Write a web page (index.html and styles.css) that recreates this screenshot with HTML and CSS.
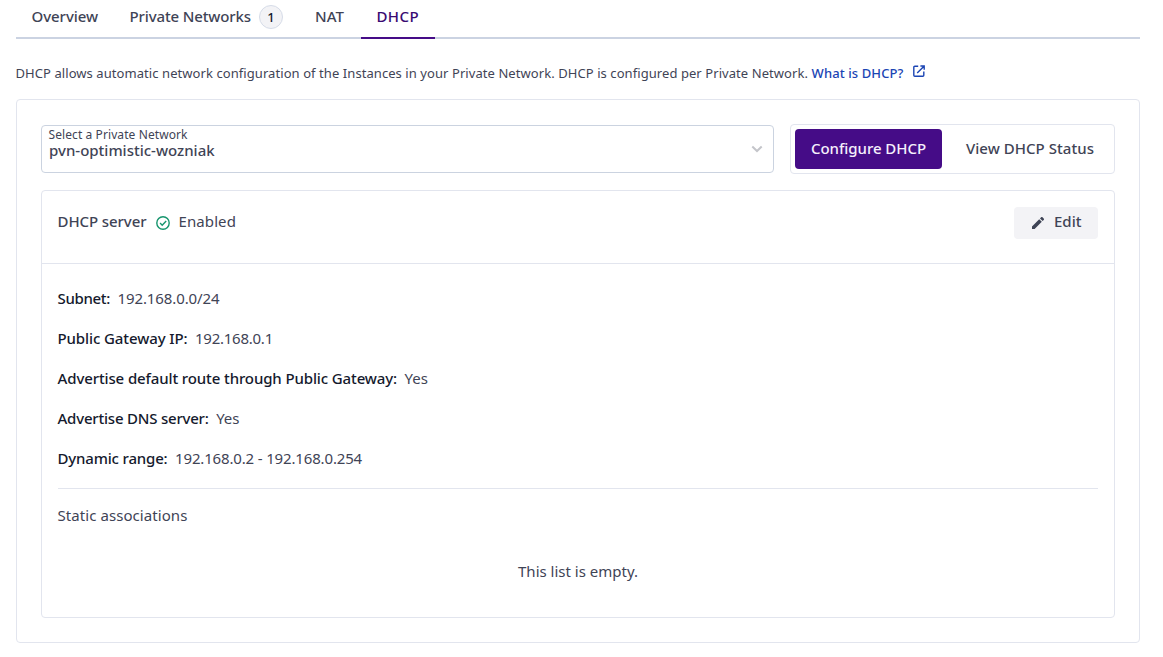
FILE: index.html
```html
<!DOCTYPE html>
<html lang="en">
<head>
<meta charset="utf-8">
<title>DHCP</title>
<link rel="stylesheet" href="styles.css">
</head>
<body>
<nav class="tabs">
  <a class="tab tab-overview">Overview</a>
  <a class="tab tab-networks"><span>Private Networks</span><span class="badge">1</span></a>
  <a class="tab tab-nat">NAT</a>
  <a class="tab tab-active">DHCP</a>
</nav>
<p class="intro"><span>DHCP allows automatic network configuration of the Instances in your Private Network. DHCP is configured per Private Network.</span><a class="link">What is DHCP?</a><svg class="external" viewBox="0 0 12 12"><path d="M5.2 1.2H1.8a1 1 0 0 0-1 1v8a1 1 0 0 0 1 1h8a1 1 0 0 0 1-1V6.6M7.4 1h3.8v3.8M11 1.2 4.2 8"/></svg></p>
<main class="card">
  <div class="controls">
    <div class="select">
      <div class="select-text">
        <span class="select-label">Select a Private Network</span>
        <span class="select-value">pvn-optimistic-wozniak</span>
      </div>
      <svg class="chevron" viewBox="0 0 12 8"><path d="m1.3 1.5 4.7 4.5 4.7-4.5"/></svg>
    </div>
    <div class="switch">
      <button class="option option-on">Configure DHCP</button>
      <button class="option option-off">View DHCP Status</button>
    </div>
  </div>
  <section class="panel">
    <header class="panel-head">
      <span class="title">DHCP server</span>
      <svg class="check" viewBox="0 0 14 14"><circle cx="7" cy="7" r="6.2"/><path d="m4.1 7.1 2.1 2.1 4-4.2"/></svg>
      <span class="state">Enabled</span>
      <button class="edit"><svg class="pencil" viewBox="0 0 12 12"><path d="M0 9.4 7.2 2.2l2.6 2.6L2.6 12H0zM8 1.4 9.1.3a1 1 0 0 1 1.4 0l1.2 1.2a1 1 0 0 1 0 1.4L10.6 4z"/></svg>Edit</button>
    </header>
    <div class="panel-body">
      <dl class="details">
        <div class="row"><dt class="k-subnet">Subnet:</dt><dd class="v-cidr">192.168.0.0/24</dd></div>
        <div class="row"><dt class="k-gateway">Public Gateway IP:</dt><dd class="v-ip">192.168.0.1</dd></div>
        <div class="row"><dt class="k-route">Advertise default route through Public Gateway:</dt><dd class="v-yes">Yes</dd></div>
        <div class="row"><dt class="k-dns">Advertise DNS server:</dt><dd class="v-yes">Yes</dd></div>
        <div class="row"><dt class="k-range">Dynamic range:</dt><dd class="v-range">192.168.0.2 - 192.168.0.254</dd></div>
      </dl>
      <h2 class="subtitle">Static associations</h2>
      <p class="empty">This list is empty.</p>
    </div>
  </section>
</main>
</body>
</html>
```
FILE: styles.css
```css
* { box-sizing: border-box; }
body {
  margin: 0;
  padding: 0 23px 0 16px;
  background: #fff;
  color: #3f4456;
  font: 400 15px/24px "Noto Sans", sans-serif;
}
svg { fill: none; flex: none; }
button { border: 0; font: inherit; color: inherit; }
p, dl, dd, h2 { margin: 0; }

.tabs {
  display: flex;
  height: 39px;
  box-shadow: inset 0 -2px #cbd3e2;
  font-weight: 500;
  white-space: nowrap;
}
.tab { display: flex; height: 39px; padding: 4px 16px 0 15.5px; }
.tab-overview { width: 98px; letter-spacing: -.06px; }
.tab-networks { width: 185px; justify-content: space-between; letter-spacing: -.13px; }
.tab-nat { width: 62px; padding-left: 16px; }
.tab-active {
  width: 74px;
  color: #390a72;
  border-bottom: 2px solid #450c87;
  letter-spacing: .4px;
}
.badge {
  width: 24px;
  height: 24px;
  margin-top: 1px;
  border: 1px solid #d6dce8;
  border-radius: 50%;
  background: #f3f3f6;
  color: #151a2d;
  font-size: 13px;
  line-height: 22px;
  text-align: center;
  letter-spacing: 0;
}

.intro {
  display: flex;
  margin: 22px 0 14px -.5px;
  font-size: 13px;
  white-space: nowrap;
  letter-spacing: .07px;
}
.link { margin-left: 3.5px; color: #1b45b4; font-weight: 500; letter-spacing: .1px; }
.external { width: 12px; height: 12px; margin: 4px 0 0 10px; stroke: #1b45b4; stroke-width: 1.4; }

.card {
  height: 544px;
  padding: 24px;
  border: 1px solid #e2e5ee;
  border-radius: 4px;
}
.controls { display: flex; gap: 16px; align-items: center; height: 50px; }
.select {
  display: flex;
  justify-content: space-between;
  align-items: center;
  width: 733px;
  height: 48px;
  padding: 0 10px 0 6.5px;
  border: 1px solid #cbd3e0;
  border-radius: 4px;
}
.select-text { display: flex; flex-direction: column; height: 46px; padding-top: 2px; }
.select-label { font-size: 12px; line-height: 14px; letter-spacing: .09px; }
.select-value { padding-left: .5px; line-height: 16px; font-weight: 500; }
.chevron { width: 12px; height: 8px; stroke: #c4c5ca; stroke-width: 2; }
.switch {
  display: flex;
  width: 325px;
  height: 50px;
  padding: 4px;
  border: 1px solid #e2e5ee;
  border-radius: 4px;
}
.option {
  flex: none;
  height: 40px;
  padding: 0 0 2px;
  border-radius: 4px;
  background: none;
  font-weight: 500;
  white-space: nowrap;
}
.option-on { width: 147px; background: #450c87; color: #f5f0fc; letter-spacing: -.04px; }
.option-off { width: 168px; padding-left: 8px; letter-spacing: .04px; }

.panel { height: 428px; margin-top: 16px; border: 1px solid #e2e5ee; border-radius: 4px; }
.panel-head {
  display: flex;
  align-items: flex-start;
  height: 73px;
  padding: 16px 16px 16px 15.5px;
  border-bottom: 1px solid #e2e5ee;
}
.title { margin-top: 2px; width: 89.5px; font-weight: 500; letter-spacing: -.08px; }
.check { width: 14px; height: 14px; margin: 9px 8.5px 0 9px; stroke: #16956d; stroke-width: 1.4; }
.state { margin-top: 2px; letter-spacing: .1px; }
.edit {
  display: flex;
  gap: 10px;
  width: 84px;
  height: 32px;
  margin-left: auto;
  padding: 2px 0 0 18px;
  border-radius: 4px;
  background: #f3f3f6;
  font-weight: 500;
}
.pencil { width: 12px; height: 12px; margin-top: 8px; fill: #3f4456; }

.panel-body { padding: 22px 16px 0; }
.details {
  display: flex;
  flex-direction: column;
  gap: 16px;
  padding-bottom: 18px;
  border-bottom: 1px solid #e2e5ee;
}
.row { display: flex; gap: 7.5px; margin-left: -.5px; }
dt { color: #151a2d; font-weight: 500; }
.k-subnet { letter-spacing: -.33px; }
.k-gateway { letter-spacing: -.1px; }
.k-route { letter-spacing: -.12px; }
.k-dns { letter-spacing: -.21px; }
.k-range { letter-spacing: -.17px; }
.v-cidr { letter-spacing: -.1px; }
.v-ip { letter-spacing: -.25px; }
.v-yes { letter-spacing: 0; }
.v-range { letter-spacing: -.155px; }
.subtitle { margin: 14px 0 0 -.5px; font: inherit; letter-spacing: .07px; }
.empty { margin-top: 32px; text-align: center; }
```
